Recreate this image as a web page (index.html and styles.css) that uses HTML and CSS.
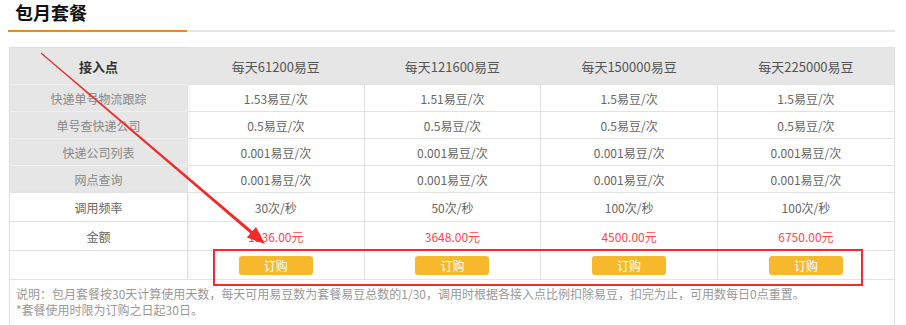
FILE: index.html
```html
<!DOCTYPE html>
<html lang="zh-CN">
<head>
  <meta charset="UTF-8">
  <title>包月套餐</title>
  <link rel="stylesheet" href="styles.css">
</head>
<body>
  <div class="page">
    <div class="title-bar">
      <h2 class="title">包月套餐</h2>
    </div>

    <div class="plan-box">
      <table class="plan-table">
        <tr class="head-row">
          <th class="side">接入点</th>
          <th>每天61200易豆</th>
          <th>每天121600易豆</th>
          <th>每天150000易豆</th>
          <th>每天225000易豆</th>
        </tr>
        <tr>
          <td class="side api">快递单号物流跟踪</td>
          <td>1.53易豆/次</td>
          <td>1.51易豆/次</td>
          <td>1.5易豆/次</td>
          <td>1.5易豆/次</td>
        </tr>
        <tr>
          <td class="side api">单号查快递公司</td>
          <td>0.5易豆/次</td>
          <td>0.5易豆/次</td>
          <td>0.5易豆/次</td>
          <td>0.5易豆/次</td>
        </tr>
        <tr>
          <td class="side api">快递公司列表</td>
          <td>0.001易豆/次</td>
          <td>0.001易豆/次</td>
          <td>0.001易豆/次</td>
          <td>0.001易豆/次</td>
        </tr>
        <tr>
          <td class="side api">网点查询</td>
          <td>0.001易豆/次</td>
          <td>0.001易豆/次</td>
          <td>0.001易豆/次</td>
          <td>0.001易豆/次</td>
        </tr>
        <tr class="tall">
          <td class="side">调用频率</td>
          <td>30次/秒</td>
          <td>50次/秒</td>
          <td>100次/秒</td>
          <td>100次/秒</td>
        </tr>
        <tr class="tall">
          <td class="side">金额</td>
          <td class="price">1836.00元</td>
          <td class="price">3648.00元</td>
          <td class="price">4500.00元</td>
          <td class="price">6750.00元</td>
        </tr>
        <tr class="tall">
          <td class="side"></td>
          <td><button class="buy-button">订购</button></td>
          <td><button class="buy-button">订购</button></td>
          <td><button class="buy-button">订购</button></td>
          <td><button class="buy-button">订购</button></td>
        </tr>
      </table>
      <div class="notes">
        <p>说明：包月套餐按30天计算使用天数，每天可用易豆数为套餐易豆总数的1/30，调用时根据各接入点比例扣除易豆，扣完为止，可用数每日0点重置。</p>
        <p>*套餐使用时限为订购之日起30日。</p>
      </div>
    </div>

    <!-- red annotation drawn over the screenshot -->
    <svg class="markup" width="906" height="325" viewBox="0 0 906 325">
      <polygon points="41.3,52.6 252.4,231.1 256,227 265,244 246.8,237.6 250.4,233.5 40.7,53.4" fill="#f32a2a"/>
      <rect x="214" y="250" width="648" height="35" fill="none" stroke="#f32a2a" stroke-width="2"/>
    </svg>
  </div>
</body>
</html>
```

FILE: styles.css
```css
body {
  font-family: "Noto Sans CJK SC", "Open Sans", sans-serif;
  background-color: #fff;
  margin: 0;
  padding: 0;
}

.page {
  position: relative;
  width: 906px;
  height: 325px;
  overflow: hidden;
}

.title-bar {
  margin: 0 11px 0 8px;
  border-bottom: 2px solid #e6e6e6;
  height: 30px;
}

.title {
  display: inline-block;
  margin: 0;
  width: 179px;
  box-sizing: border-box;
  padding-left: 7px;
  height: 32px;
  line-height: 24px;
  font-size: 18px;
  font-weight: bold;
  color: #111;
  border-bottom: 2px solid #f08a12;
}

.plan-box {
  margin: 15px 11px 0 9px;
  border: 1px solid #e2e2e2;
  box-shadow: 0 1px 2px rgba(0,0,0,0.06);
}

.plan-table {
  width: 100%;
  table-layout: fixed;
  border-collapse: collapse;
}

.plan-table th,
.plan-table td {
  text-align: center;
  font-size: 12px;
  color: #666;
  height: 26px;
  padding: 0;
  border-top: 1px solid #e2e2e2;
  border-left: 1px solid #e2e2e2;
}

.plan-table th:first-child,
.plan-table td:first-child {
  border-left: none;
  width: 177px;
}

.head-row th {
  height: 36px;
  border-top: none;
  background-color: #e6e6e6;
  border-left-color: #e6e6e6;
  font-size: 13px;
  font-weight: normal;
  color: #555;
}

.head-row th.side {
  font-weight: bold;
  color: #333;
}

.side.api {
  background-color: #e6e6e6;
  border-top-color: #f0f0f0;
  color: #888;
}

.side {
  box-shadow: 2px 0 3px rgba(0,0,0,0.05);
}

.tall td {
  height: 28px;
}

.price {
  color: #ff4646 !important;
}

.buy-button {
  width: 74px;
  height: 19px;
  padding: 0;
  border: none;
  border-radius: 3px;
  background-color: #f6b92b;
  color: #fff;
  font-family: inherit;
  font-size: 12px;
  cursor: pointer;
}

.notes {
  border-top: 1px solid #e2e2e2;
  padding: 6px 6px 8px;
  font-size: 12px;
  line-height: 16px;
  color: #999;
}

.notes p {
  margin: 0;
}

.markup {
  position: absolute;
  left: 0;
  top: 0;
  pointer-events: none;
}
```
